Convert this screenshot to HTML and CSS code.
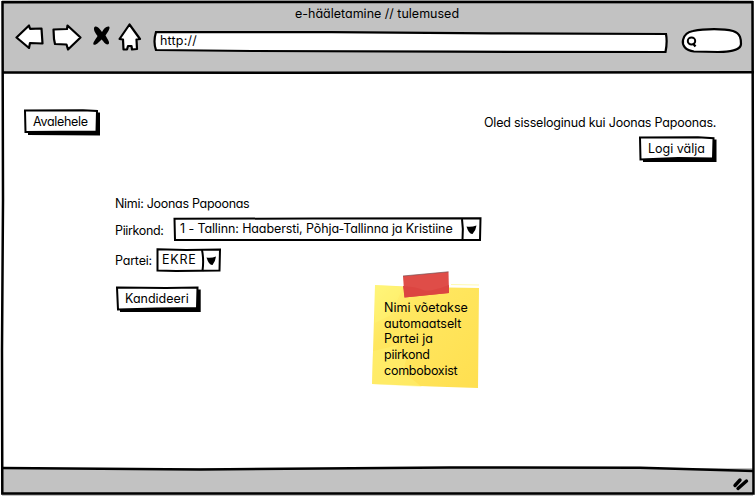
FILE: index.html
```html
<!DOCTYPE html>
<html lang="et">
<head>
<meta charset="utf-8">
<title>e-hääletamine // tulemused</title>
<link rel="stylesheet" href="styles.css">
</head>
<body>
<div class="window">
  <header class="chrome">
    <div class="title"><span class="t-title">e-hääletamine // tulemused</span></div>
    <div class="toolbar">
      <svg class="nav" width="142" height="34" viewBox="0 0 142 34">
        <g fill="#fff" stroke="#000" stroke-width="2.200" stroke-linejoin="round">
          <path d="M1.500 16.500L14 4.500L15 7.800L26.500 7.500L27.500 22.500L15 22L14 27Z"/>
          <path d="M38.500 8.500L52 8L52.500 4.500L65.500 16.500L53 28.500L51.500 23.500L40 23L39 18Z"/>
          <path d="M114.500 3.500L125 18L121.500 18.500L122 28L117 28.500L116.500 25L113 25L112 28.500L108.500 28.500L108 18.500L104.500 18Z"/>
        </g>
        <path d="M79.500 6C82 4.500 84 7 87 11C89 7.500 91 5 94 5.500C96 7 92 12 90.500 14.500C92.500 18 95.500 22 93.300 23.300C90.500 24 88.500 20.500 86.700 18.500C84 21 80.500 25 78.500 23.500C77.500 21.500 81 18 82.500 15C80 12 78 8 79.500 6Z"/>
      </svg>
      <div class="address">
        <svg class="shape" width="518" height="24" viewBox="0 0 518 24"><path d="M4 3L180 3.200L340 4.300L514 5Q515.500 13 513.500 23L300 22.700L100 22L4 21Q1 13 4 3Z" fill="#fff" stroke="#000" stroke-width="2.200"/></svg>
        <span class="t-http">http://</span>
      </div>
      <svg class="search" width="64" height="28" viewBox="0 0 64 28"><path d="M13 4C25 1.500 44 1.500 53 4C61 6.500 61 13 61 17C61 23 49 25 38 25L14 24.500C5 23.500 2 18 3 13C4 8 7 5 13 4Z" fill="#fff" stroke="#000" stroke-width="2.200"/><g fill="none" stroke="#000"><ellipse cx="11.500" cy="14" rx="3.700" ry="3.400" stroke-width="2"/><path d="M13 16.500L15.500 19.500" stroke-width="2.300"/></g></svg>
    </div>
  </header>
  <main class="page">
    <div class="account">
      <div class="button home">
        <svg class="shape" width="78" height="28" viewBox="0 0 78 28"><path d="M73 3.500H77V26.500L5 26V22H73Z"/><path d="M2 1.500L60 1.200L74 2L73.500 22.500L2.500 23Z" fill="#fff" stroke="#000" stroke-width="2"/></svg>
        <span class="t-home">Avalehele</span>
      </div>
      <div class="session">
        <span class="t-session">Oled sisseloginud kui Joonas Papoonas.</span>
        <div class="button logout">
          <svg class="shape" width="79" height="28" viewBox="0 0 79 28"><path d="M75 3.500H78.500V26H5V22H75Z"/><path d="M2 1.500L60 1.300L75.500 2.300L75 22.500L40 22L2.500 23.500Z" fill="#fff" stroke="#000" stroke-width="2"/></svg>
          <span class="t-logout">Logi välja</span>
        </div>
      </div>
    </div>
    <div class="content">
      <div class="form">
        <div class="name t-name">Nimi: Joonas Papoonas</div>
        <div class="row region">
          <span class="label t-region">Piirkond:</span>
          <div class="combo wide">
            <svg class="shape" width="309" height="25" viewBox="0 0 309 25"><path d="M1.500 1.800L140 1.500L307.500 1.200L307 23L2 23Z" fill="#fff" stroke="#000" stroke-width="2"/><path d="M289 2Q290.500 12 289.500 23" fill="none" stroke="#000" stroke-width="2"/><path d="M293.500 9.500Q298 10.500 303.500 8.500Q303 13 299.500 17Q296 17.500 293.500 9.500Z"/></svg>
            <span class="t-value">1 - Tallinn: Haabersti, Põhja-Tallinna ja Kristiine</span>
          </div>
        </div>
        <div class="row party">
          <span class="label t-party">Partei:</span>
          <div class="combo small">
            <svg class="shape" width="65" height="25" viewBox="0 0 65 25"><path d="M1.500 1.200L30 2L64 1.500L63.500 22.500L20 23L1.500 22.500Z" fill="#fff" stroke="#000" stroke-width="2"/><path d="M46 2Q48 12 46.500 23" fill="none" stroke="#000" stroke-width="2"/><path d="M50.500 9.500Q55 10.500 60 8.500Q59.500 13 56.500 17Q53 17.500 50.500 9.500Z"/></svg>
            <span class="t-ekre">EKRE</span>
          </div>
        </div>
        <div class="button submit">
          <svg class="shape" width="85" height="28" viewBox="0 0 85 28"><path d="M81 3.500H84.700V26H4V22H81Z"/><path d="M1 1.500L50 2L81.500 1.500L81 22L40 22.500L2 23.500Z" fill="#fff" stroke="#000" stroke-width="2"/></svg>
          <span class="t-submit">Kandideeri</span>
        </div>
      </div>
      <aside class="note">
        <svg class="shape" width="109" height="120" viewBox="0 0 109 120">
          <defs><linearGradient id="paper" x1="0" y1="0" x2="1" y2="1"><stop offset="0" stop-color="#fff47c"/><stop offset=".3" stop-color="#ffe760"/><stop offset="1" stop-color="#ffdf50"/></linearGradient></defs>
          <path d="M3 14L45 16L107 17L106 117L60 115.500L0 113Z" fill="url(#paper)"/>
          <path d="M1 80L27 74L21 80L34 89L31 101L50 116L0 113Z" fill="#fff579" opacity=".4"/>
          <path d="M3 14L31 16L19 44L3 52Z" fill="#fff878" opacity=".35"/>
          <path d="M79 13.500L107 14" stroke="#fffbb0"/>
          <path d="M31 5L76.500 .8L77 22L32.500 26.500Z" fill="#df4d48"/>
          <path d="M31 15Q46 16 51 19T77 14V22L32.500 26.500Z" fill="#dc4541"/>
          <path d="M31 5L76.500 .8" stroke="#765253" stroke-width=".7"/>
        </svg>
        <p class="t-note"><span>Nimi võetakse</span><br><span class="snug">automaatselt</span><br>Partei ja<br><span class="tight">piirkond</span><br><span class="tight">comboboxist</span></p>
      </aside>
    </div>
  </main>
  <footer class="status">
    <svg width="18" height="15" viewBox="0 0 18 15"><path d="M3 9.500L8 4M6 12.500L14.500 5" fill="none" stroke="#000" stroke-width="3.400" stroke-linecap="round"/></svg>
  </footer>
  <svg class="frame" width="755" height="496" viewBox="0 0 755 496"><g fill="none" stroke="#000" stroke-width="2.500"><path d="M2.500 2.200L300 2L752.500 2.200L753 200L753.500 493.500L400 493.500L2.300 493.500L2 350L3 200Z"/><path d="M2 72.500L300 72.700L754 72.300M2 468L200 469.500L450 467.500L640 467.700L754 471"/></g></svg>
</div>
</body>
</html>
```
FILE: styles.css
```css
* { box-sizing: border-box; }
body {
  margin: 0;
  background: #fff;
  color: #000;
  font: 12.5px/16px Inter, "Liberation Sans", sans-serif;
  font-feature-settings: "cv11";
}
.window {
  position: relative;
  display: flex;
  flex-direction: column;
  width: 755px;
  height: 496px;
  overflow: hidden;
}
span, .name { white-space: nowrap; }
.frame { position: absolute; inset: 0; pointer-events: none; }
.shape { position: absolute; left: 0; top: 0; z-index: -1; }
.chrome { height: 73px; margin: 0 2px; padding-top: 6px; background: #c2c2c2; }
.title { display: flex; padding-left: 293px; }
.toolbar { display: flex; align-items: flex-start; padding-left: 13px; }
.nav { margin-top: -1px; }
.address { position: relative; z-index: 0; width: 516px; height: 24px; margin: 7px 0 0 -5px; padding: 4px 0 0 8px; }
.search { margin: 5px 0 0 12px; }
.page { flex: 1; padding: 36px 37px 0 23px; }
.account { display: flex; justify-content: space-between; align-items: flex-start; }
.button, .combo { position: relative; z-index: 0; flex: none; }
.home { width: 78px; height: 28px; padding: 5px 0 0 10px; }
.session { display: flex; flex-direction: column; width: 234px; padding: 6px 0 0; }
.logout { width: 79px; height: 28px; margin: 5px 1px 0 0; padding: 5px 0 0 10px; align-self: flex-end; }
.content { display: flex; align-items: flex-start; padding: 32px 0 0 92px; }
.form { width: 257px; }
.row { display: flex; align-items: flex-start; }
.label { flex: none; }
.region { margin-top: 5px; }
.region .label { width: 58px; padding-top: 6px; }
.wide { width: 309px; height: 25px; padding: 4px 0 0 7px; }
.party { margin-top: 6px; }
.party .label { width: 41px; padding-top: 5px; }
.small { width: 65px; height: 25px; padding: 4px 0 0 6px; }
.submit { width: 85px; height: 28px; margin: 13px 0 0 1px; padding: 5px 0 0 9px; }
.note { position: relative; z-index: 0; width: 109px; height: 120px; margin-top: 75px; padding: 29px 0 0 12px; }
.note p { margin: 0; line-height: 15.7px; white-space: nowrap; }
.status { display: flex; justify-content: flex-end; height: 28px; margin: 0 2px; padding: 8px 3px 0 0; background: #c2c2c2; }
.t-http { letter-spacing: .2px; }
.t-home { letter-spacing: -.3px; }
.t-session { letter-spacing: -.2px; }
.t-name { letter-spacing: -.3px; }
.t-region { letter-spacing: -.35px; }
.t-value { letter-spacing: -.11px; }
.t-party { letter-spacing: -.2px; }
.t-ekre { letter-spacing: .8px; }
.snug { letter-spacing: -.05px; }
.tight { letter-spacing: -.25px; }
```
